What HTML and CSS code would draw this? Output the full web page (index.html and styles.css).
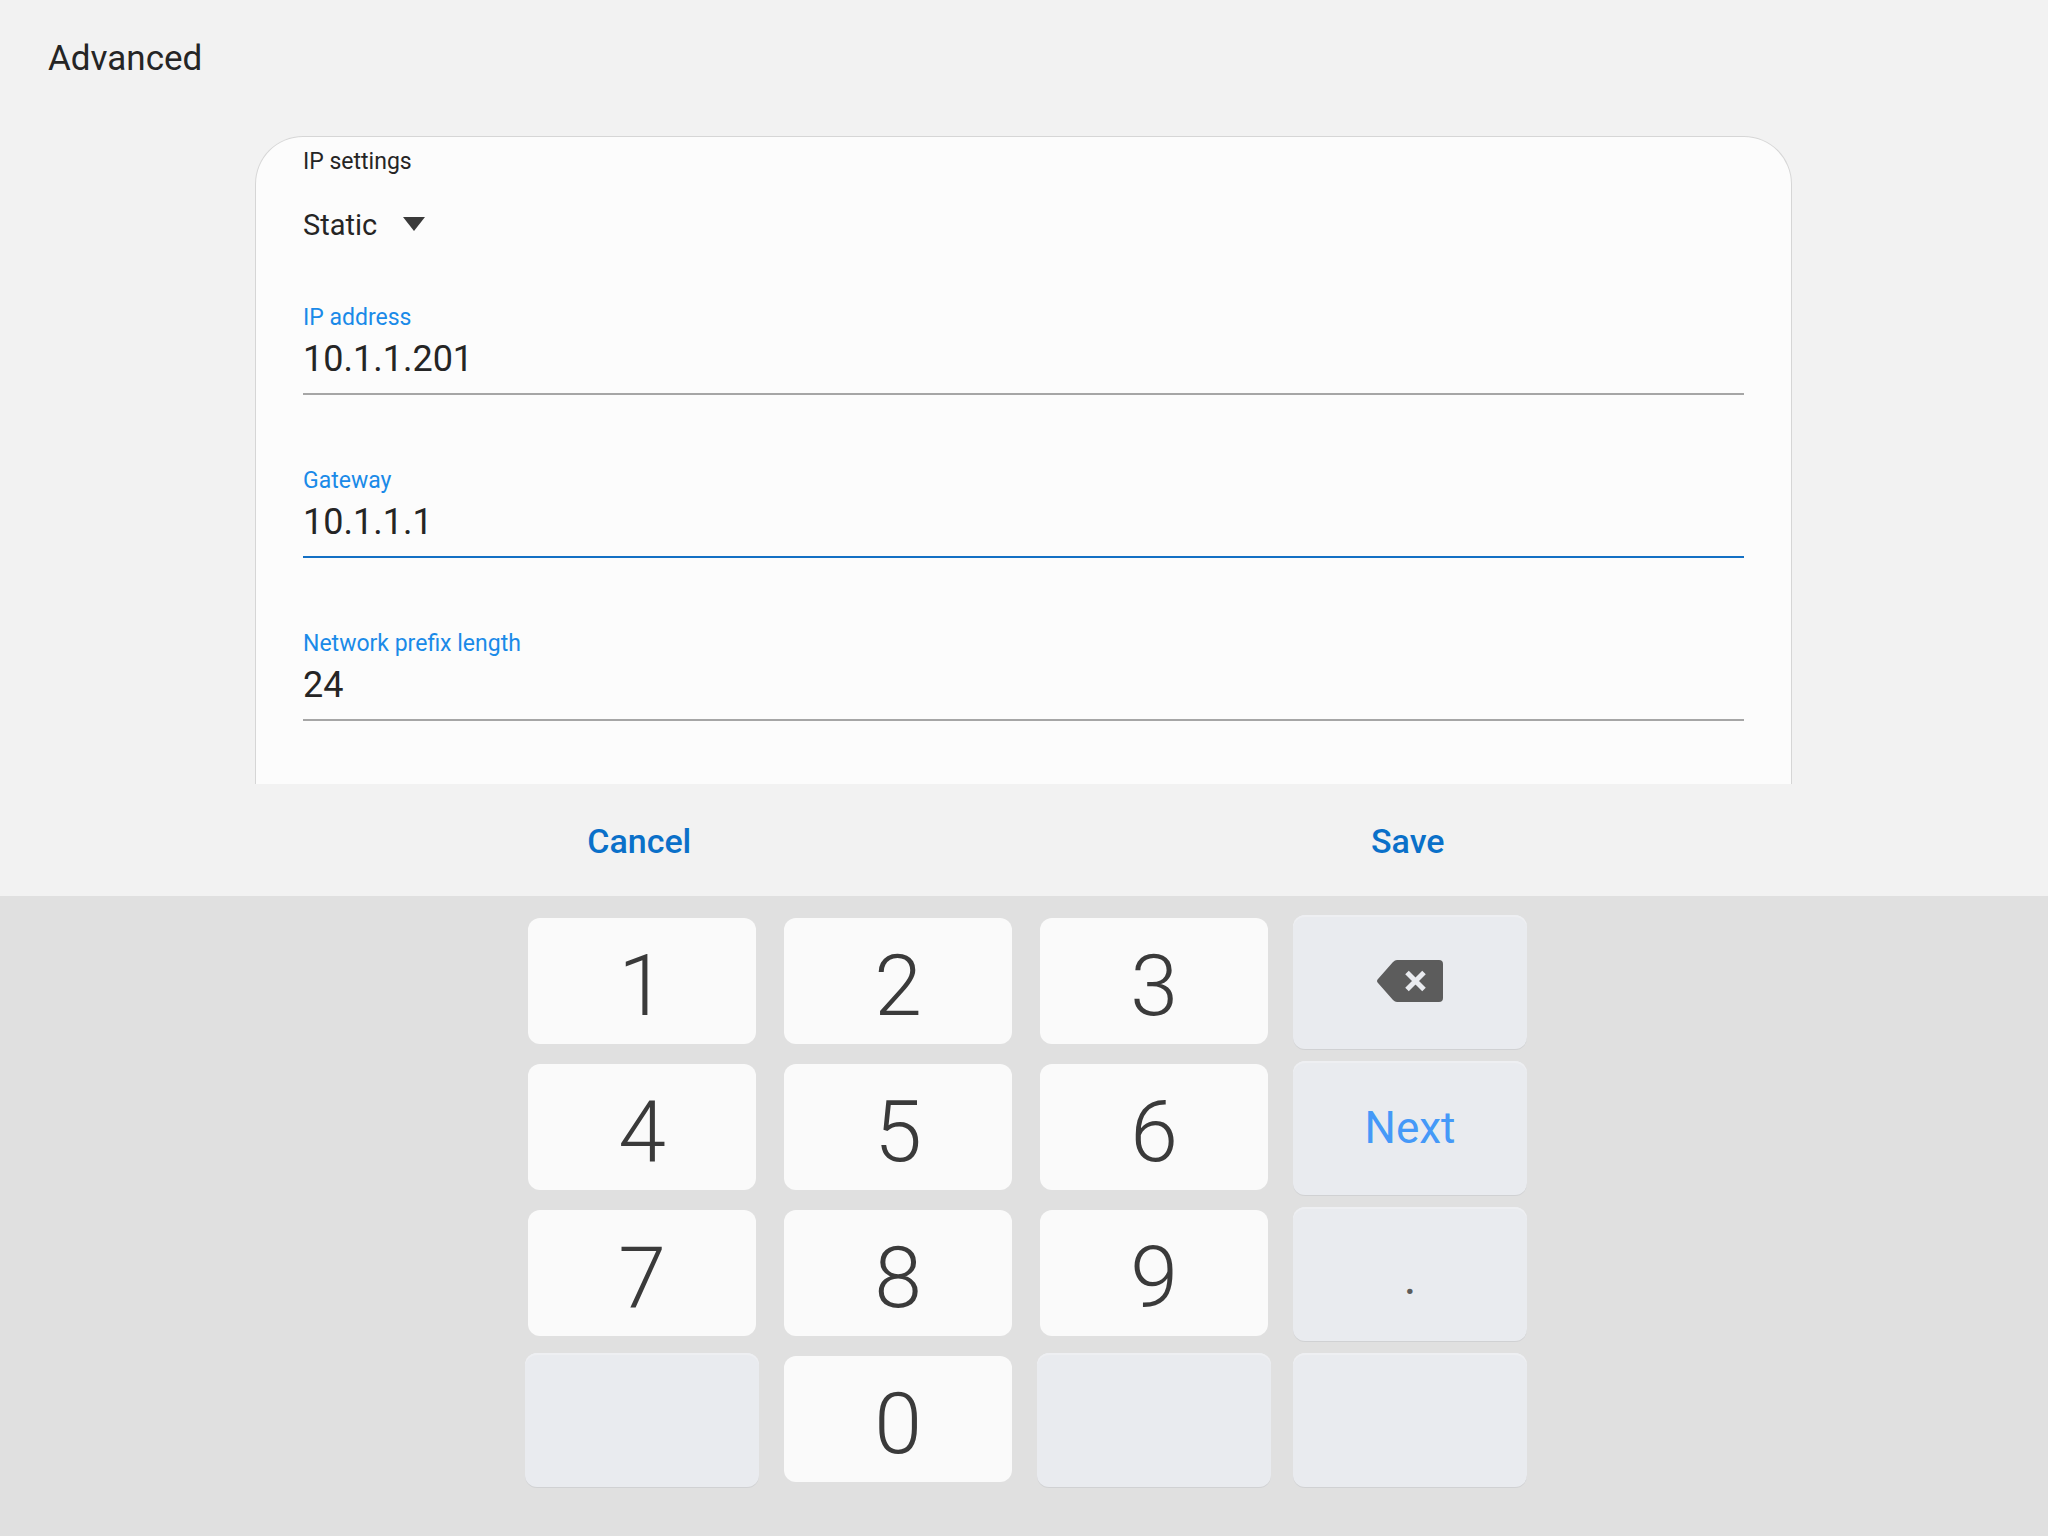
FILE: index.html
```html
<!DOCTYPE html>
<html lang="en">
<head>
<meta charset="utf-8">
<meta name="viewport" content="width=device-width, initial-scale=1">
<title>Advanced</title>
<link rel="stylesheet" href="styles.css">
</head>
<body>
<header class="header">
  <h1 class="title">Advanced</h1>
</header>
<form class="form">
  <main class="card">
    <label class="label label-plain" for="ip-settings">IP settings</label>
    <div class="spinner">
      <select class="select" id="ip-settings">
        <option>Static</option>
      </select>
      <svg class="arrow" viewBox="0 0 22 16" aria-hidden="true"><path d="M0 0H22L11 14Z"/></svg>
    </div>
    <div class="field">
      <label class="label" for="ip-address">IP address</label>
      <input class="input" id="ip-address" type="text" inputmode="decimal" value="10.1.1.201">
    </div>
    <div class="field">
      <label class="label" for="gateway">Gateway</label>
      <input class="input input-active" id="gateway" type="text" inputmode="decimal" value="10.1.1.1">
    </div>
    <div class="field">
      <label class="label" for="prefix">Network prefix length</label>
      <input class="input" id="prefix" type="text" inputmode="numeric" value="24">
    </div>
  </main>
  <div class="actions">
    <button class="action" type="button">Cancel</button>
    <button class="action" type="submit">Save</button>
  </div>
</form>
<section class="keyboard">
  <div class="keys">
    <button class="key" type="button">1</button>
    <button class="key" type="button">2</button>
    <button class="key" type="button">3</button>
    <button class="key key-side" type="button" aria-label="Delete">
      <svg class="delete" viewBox="0 0 66 44" aria-hidden="true">
        <path fill="#5c5c5c" d="M20 0H62Q66 0 66 4V38Q66 42 62 42H20Q18 42 16 40L1 23Q-1 21 1 19L16 2Q18 0 20 0Z"/>
        <path stroke="#e9ebef" stroke-width="5" d="M30 12.500 47 29.500M47 12.500 30 29.500"/>
      </svg>
    </button>
    <button class="key" type="button">4</button>
    <button class="key" type="button">5</button>
    <button class="key" type="button">6</button>
    <button class="key key-side key-next" type="button">Next</button>
    <button class="key" type="button">7</button>
    <button class="key" type="button">8</button>
    <button class="key" type="button">9</button>
    <button class="key key-side key-dot" type="button">.</button>
    <div class="key key-side"></div>
    <button class="key" type="button">0</button>
    <div class="key key-side"></div>
    <div class="key key-side"></div>
  </div>
</section>
</body>
</html>
```

FILE: styles.css
```css
* {
  box-sizing: border-box;
}

body {
  margin: 0;
  height: 100vh;
  display: flex;
  flex-direction: column;
  overflow: hidden;
  background: #f2f2f2;
  color: #252525;
  font-family: Roboto, "Liberation Sans", sans-serif;
}

button,
input,
select {
  margin: 0;
  padding: 0;
  border: 0;
  border-radius: 0;
  background: none;
  color: inherit;
  font-family: inherit;
  outline: none;
}

.header {
  flex: none;
  padding: 37px 48px 55px;
}

.title {
  margin: 0;
  font-size: 35px;
  line-height: 44px;
  font-weight: 400;
}

.form {
  flex: 1;
  min-height: 0;
  display: flex;
  flex-direction: column;
  padding: 0 12.5% 0 calc(12.5% - 1px);
}

.card {
  flex: 1;
  min-height: 0;
  overflow: hidden;
  padding: 10px 47px 0;
  border: 1px solid #d6d6d6;
  border-bottom: 0;
  border-radius: 48px 48px 0 0;
  background: #fcfcfc;
}

.label {
  display: block;
  font-size: 23px;
  line-height: 30px;
  color: #1a8ae8;
}

.label-plain {
  color: #252525;
}

.spinner {
  display: flex;
  align-items: center;
  gap: 25px;
  margin: 30px 0 60px;
}

.select {
  appearance: none;
  height: 36px;
  font-size: 29px;
  line-height: 36px;
}

.arrow {
  width: 22px;
  height: 16px;
  fill: #3a3a3a;
}

.field {
  margin-bottom: 71px;
}

.input {
  display: block;
  width: 100%;
  height: 62px;
  padding-bottom: 8px;
  border-bottom: 2px solid #a6a6a6;
  font-size: 36px;
  line-height: 48px;
}

.input-active {
  border-color: #1470c4;
}

.actions {
  flex: none;
  display: flex;
  height: 112px;
}

.action {
  flex: 1;
  padding-top: 2px;
  font-size: 34px;
  line-height: 44px;
  font-weight: 500;
  color: #0a70c9;
}

.keyboard {
  flex: none;
  display: flex;
  justify-content: center;
  padding: 12px 0 44px 4px;
  background: #e0e0e0;
}

.keys {
  flex: 0 1 1024px;
  display: grid;
  grid-template-columns: repeat(4, 1fr);
  grid-auto-rows: 146px;
}

.key {
  display: flex;
  align-items: center;
  justify-content: center;
  margin: 10px 14px;
  padding-top: 9px;
  border-radius: 12px;
  background: #fafafa;
  color: #3a3a3a;
  font-size: 86px;
  line-height: 104px;
  font-weight: 300;
}

.key-side {
  margin: 7px 11px 5px;
  padding-top: 0;
  background: #e9ebef;
  box-shadow: inset 0 2px #eeeff2, 0 1px #d0d1d3;
}

.key-next {
  color: #4599f8;
  font-size: 44px;
  line-height: 52px;
  font-weight: 400;
}

.key-dot {
  padding-top: 8px;
  color: #5c5c5c;
  font-size: 48px;
  line-height: 56px;
  font-weight: 400;
}

.delete {
  width: 66px;
  height: 44px;
}
```
